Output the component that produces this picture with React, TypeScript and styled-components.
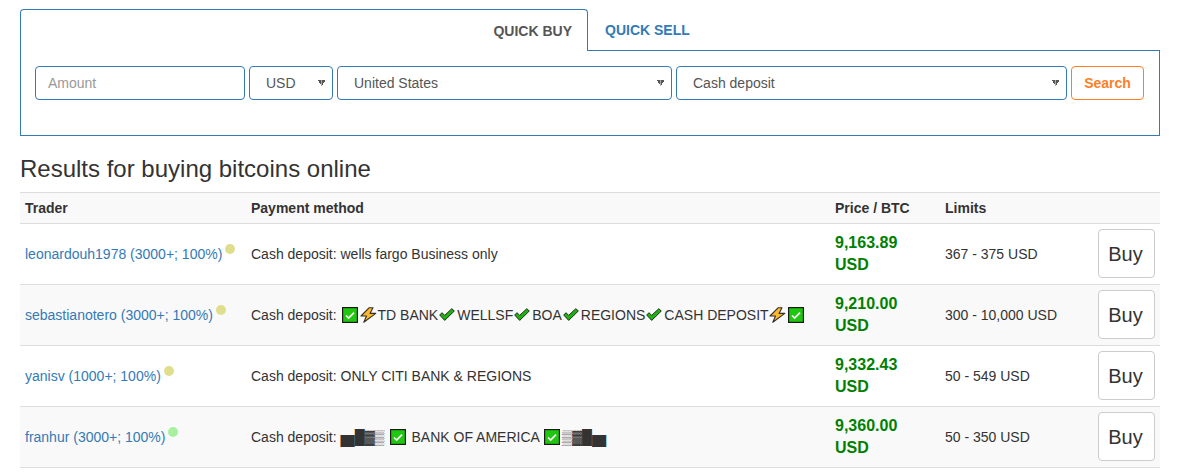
import React from "react";
import styled, { createGlobalStyle } from "styled-components";

const Global = createGlobalStyle`
  html, body { margin: 0; padding: 0; background: #fff; }
  body { font-family: "Liberation Sans", Arial, sans-serif; font-size: 14px; line-height: 20px; color: #333; }
  * { box-sizing: border-box; }
`;

const Page = styled.div`
  width: 1189px;
  height: 472px;
  overflow: hidden;
  padding: 9px 29px 0 20px;
`;

const TabRow = styled.div`
  display: flex;
  height: 42px;
`;

const ActiveTab = styled.div`
  width: 568px;
  height: 42px;
  border: 1px solid #337ab7;
  border-bottom: 0;
  border-radius: 4px 4px 0 0;
  display: flex;
  align-items: center;
  justify-content: flex-end;
  padding: 0 15px 0 0;
  font-weight: 700;
  font-size: 14px;
  color: #555;
`;

const IdleTabArea = styled.div`
  flex: 1;
  height: 42px;
  border-bottom: 1px solid #337ab7;
  display: flex;
  align-items: center;
  padding: 0 0 0 17px;
  font-weight: 700;
  font-size: 14px;
  color: #337ab7;
`;

const SearchPanel = styled.div`
  height: 85px;
  border: 1px solid #337ab7;
  border-top: 0;
  display: flex;
  align-items: flex-start;
  padding: 15px 14px 0;
  gap: 4px;
`;

const Amount = styled.input`
  width: 210px;
  height: 34px;
  border: 1px solid #337ab7;
  border-radius: 4px;
  padding: 6px 12px;
  font: 14px "Liberation Sans", Arial, sans-serif;
  color: #555;
  background: #fff;
  &::placeholder { color: #999; opacity: 1; }
`;

const Select = styled.select<{ $w: number }>`
  width: ${(p) => p.$w}px;
  height: 34px;
  border: 1px solid #337ab7;
  border-radius: 4px;
  padding: 6px 12px 6px 16px;
  font: 14px "Liberation Sans", Arial, sans-serif;
  color: #555;
  appearance: none;
  background-color: #fff;
  background-image:
    linear-gradient(to top right, transparent 50%, #555 50%),
    linear-gradient(to top left, transparent 50%, #555 50%);
  background-size: 3.5px 6px, 3.5px 6px;
  background-position: right 10.5px center, right 7px center;
  background-repeat: no-repeat;
`;

const SearchButton = styled.button`
  width: 73px;
  height: 34px;
  border: 1px solid #ff7f27;
  border-radius: 4px;
  background: #fff;
  color: #ff7f27;
  font: 700 14px "Liberation Sans", Arial, sans-serif;
  padding: 0;
`;

const Heading = styled.h2`
  margin: 20px 0 10px;
  font-size: 24px;
  line-height: 26px;
  font-weight: 500;
  color: #333;
`;

const Table = styled.table`
  width: 1140px;
  border-collapse: collapse;
  table-layout: fixed;
`;

const HeadRow = styled.tr`
  background: #f9f9f9;
  height: 31px;
`;

const HeadCell = styled.th<{ $w?: number }>`
  ${(p) => (p.$w ? `width: ${p.$w}px;` : "")}
  border-top: 1px solid #ddd;
  border-bottom: 1px solid #ddd;
  padding: 5px;
  text-align: left;
  font-size: 14px;
  font-weight: 700;
  line-height: 20px;
  color: #333;
`;

const Row = styled.tr<{ $striped?: boolean }>`
  height: 61px;
  background: ${(p) => (p.$striped ? "#f9f9f9" : "#fff")};
`;

const Cell = styled.td`
  border-bottom: 1px solid #ddd;
  padding: 5px;
  vertical-align: middle;
  font-size: 14px;
  line-height: 20px;
  color: #333;
  white-space: nowrap;
`;

const TraderLink = styled.a`
  color: #337ab7;
  text-decoration: none;
`;

const Dot = styled.span<{ $c: string }>`
  display: inline-block;
  width: 10px;
  height: 10px;
  border-radius: 50%;
  background: ${(p) => p.$c};
  margin-left: 3px;
  vertical-align: 5px;
`;

const Price = styled.div`
  font-size: 16px;
  line-height: 22px;
  font-weight: 700;
  color: #008000;
`;

const BuyCell = styled(Cell)`
  text-align: right;
  vertical-align: top;
`;

const BuyButton = styled.button`
  display: inline-block;
  width: 57px;
  height: 49px;
  border: 1px solid #ccc;
  border-radius: 4px;
  background: #fff;
  color: #333;
  font: 20px "Liberation Sans", Arial, sans-serif;
  padding: 2px 2px 0 0;
  vertical-align: top;
`;

const LowBlock = styled.span`
  font-size: 20px;
  line-height: 0;
  vertical-align: 1px;
`;

const Emoji = styled.svg`
  display: inline-block;
  vertical-align: -3px;
`;

const BoxEmoji = styled(Emoji)`
  margin: 0 2px 0 1px;
`;

const BoltEmoji = styled(Emoji)`
  margin: 0 1px 0 0;
`;

const TickEmoji = styled(Emoji)`
  margin: 0 2px 0 1px;
  vertical-align: -1px;
`;

const BoxCheck = () => (
  <BoxEmoji width="16" height="16" viewBox="0 0 16 16">
    <rect x="0.6" y="0.6" width="14.8" height="14.8" fill="#1fc80f" stroke="#1a1a1a" strokeWidth="1.2" />
    <path d="M4 8.5l2.6 2.6L12 5.6" fill="none" stroke="#fff" strokeWidth="1.7" />
  </BoxEmoji>
);

const Bolt = () => (
  <BoltEmoji width="17" height="16" viewBox="0 0 17 16">
    <path d="M9 0.8L1 9h5.5L3.8 15.3 15.8 6.4H10L13 0.8z" fill="#fdb92e" stroke="#33302a" strokeWidth="1.1" strokeLinejoin="round" />
  </BoltEmoji>
);

const Tick = () => (
  <TickEmoji width="16" height="13" viewBox="0 0 16 13">
    <path d="M0.7 7l2.3-2.3 2.7 2.7L12.8 0.7 15.3 3l-9.6 9.4z" fill="#1eb40f" stroke="#1f2a1c" strokeWidth="1" strokeLinejoin="round" />
  </TickEmoji>
);

const rows = [
  {
    trader: "leonardouh1978 (3000+; 100%)",
    dot: "#dede8d",
    method: <>Cash deposit: wells fargo Business only</>,
    price: "9,163.89",
    limits: "367 - 375 USD",
  },
  {
    trader: "sebastianotero (3000+; 100%)",
    dot: "#dede8d",
    method: (
      <>
        Cash deposit: <BoxCheck />
        <Bolt />
        TD BANK
        <Tick />
        WELLSF
        <Tick />
        BOA
        <Tick />
        REGIONS
        <Tick />
        CASH DEPOSIT
        <Bolt />
        <BoxCheck />
      </>
    ),
    price: "9,210.00",
    limits: "300 - 10,000 USD",
  },
  {
    trader: "yanisv (1000+; 100%)",
    dot: "#dede8d",
    method: <>Cash deposit: ONLY CITI BANK &amp; REGIONS</>,
    price: "9,332.43",
    limits: "50 - 549 USD",
  },
  {
    trader: "franhur (3000+; 100%)",
    dot: "#a8f0a0",
    method: (
      <>
        Cash deposit: <LowBlock>▄</LowBlock>█▓▒ <BoxCheck /> BANK OF AMERICA <BoxCheck />
        ▒▓█<LowBlock>▄</LowBlock>
      </>
    ),
    price: "9,360.00",
    limits: "50 - 350 USD",
  },
];

export default function App() {
  return (
    <Page>
      <Global />
      <TabRow>
        <ActiveTab>QUICK BUY</ActiveTab>
        <IdleTabArea>QUICK SELL</IdleTabArea>
      </TabRow>
      <SearchPanel>
        <Amount placeholder="Amount" />
        <Select $w={84} defaultValue="USD">
          <option>USD</option>
        </Select>
        <Select $w={335} defaultValue="United States">
          <option>United States</option>
        </Select>
        <Select $w={391} defaultValue="Cash deposit">
          <option>Cash deposit</option>
        </Select>
        <SearchButton>Search</SearchButton>
      </SearchPanel>
      <Heading>Results for buying bitcoins online</Heading>
      <Table>
        <thead>
          <HeadRow>
            <HeadCell $w={226}>Trader</HeadCell>
            <HeadCell $w={584}>Payment method</HeadCell>
            <HeadCell $w={110}>Price / BTC</HeadCell>
            <HeadCell $w={140}>Limits</HeadCell>
            <HeadCell />
          </HeadRow>
        </thead>
        <tbody>
          {rows.map((r, i) => (
            <Row key={r.trader} $striped={i % 2 === 1}>
              <Cell>
                <TraderLink href="#">{r.trader}</TraderLink>
                <Dot $c={r.dot} />
              </Cell>
              <Cell>{r.method}</Cell>
              <Cell>
                <Price>
                  {r.price}
                  <br />
                  USD
                </Price>
              </Cell>
              <Cell>{r.limits}</Cell>
              <BuyCell>
                <BuyButton>Buy</BuyButton>
              </BuyCell>
            </Row>
          ))}
        </tbody>
      </Table>
    </Page>
  );
}
